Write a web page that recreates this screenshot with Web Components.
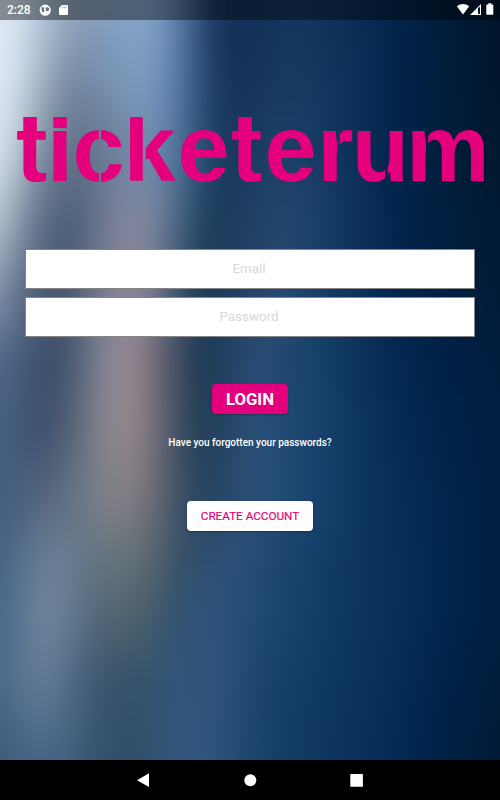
<!DOCTYPE html>
<html lang="en">
<head>
<meta charset="utf-8">
<title>ticketerum</title>
<style>
  body {
    margin: 0;
    font-family: Roboto, "Liberation Sans", sans-serif;
  }
</style>
</head>
<body>
<login-screen></login-screen>

<script>
// Each row of the backdrop: a height, then colour stops as [x, colour]
const ROWS = [
  [20, [[0, "#e0ebf6"], [20, "#d3e0ee"], [40, "#b6c7da"], [60, "#9aadc2"], [80, "#8a9fb8"], [110, "#829fc2"], [145, "#86a6ca"], [170, "#6c8cb6"], [190, "#456590"], [210, "#1e3c64"], [230, "#132f57"], [260, "#14335a"], [300, "#15375d"], [340, "#0f3157"], [390, "#04254d"], [440, "#001e3b"], [500, "#00142b"]]],
  [80, [[0, "#dfe9f3"], [20, "#cdd9e6"], [40, "#a6b6c8"], [60, "#8294a9"], [80, "#73869f"], [110, "#7893b3"], [145, "#7e9dc2"], [170, "#6485b0"], [190, "#416490"], [210, "#1f4067"], [235, "#153257"], [260, "#16365d"], [300, "#193b62"], [340, "#11345c"], [390, "#04254d"], [440, "#001f3c"], [500, "#00152b"]]],
  [150, [[0, "#dae4ee"], [20, "#b4c1cf"], [40, "#8492a5"], [60, "#65768c"], [80, "#5e6f87"], [110, "#6c7e98"], [145, "#748dae"], [170, "#5f7fa6"], [190, "#3b5f86"], [210, "#204467"], [230, "#17365a"], [280, "#1e4068"], [320, "#163b63"], [390, "#04254e"], [440, "#001f3d"], [500, "#00182f"]]],
  [220, [[0, "#b8c5d2"], [20, "#8594a8"], [40, "#5f7088"], [70, "#4a5c76"], [90, "#5d6d86"], [115, "#7c8098"], [140, "#858ba3"], [165, "#667995"], [185, "#3c5c79"], [205, "#1d405c"], [230, "#1a3b5c"], [285, "#26486f"], [325, "#173d68"], [390, "#04264f"], [440, "#001f40"], [500, "#001a32"]]],
  [290, [[0, "#8696ac"], [20, "#5f708a"], [50, "#42546d"], [75, "#4d5d75"], [100, "#777c90"], [130, "#928b9c"], [150, "#7f7c90"], [170, "#50607a"], [190, "#274460"], [210, "#1a3953"], [235, "#213f61"], [275, "#294c73"], [320, "#173e69"], [390, "#04274f"], [440, "#002044"], [500, "#001b37"]]],
  [360, [[0, "#536a8d"], [20, "#475b7b"], [50, "#3a4c67"], [75, "#4d5b73"], [100, "#7f8295"], [130, "#9a8c95"], [150, "#816f7b"], [170, "#50566a"], [190, "#29425a"], [210, "#1c3750"], [235, "#274769"], [265, "#2a4d76"], [320, "#154069"], [390, "#052a52"], [440, "#002248"], [500, "#001d3d"]]],
  [430, [[0, "#446080"], [20, "#405776"], [45, "#3d506a"], [75, "#586579"], [100, "#85858f"], [130, "#97888d"], [150, "#7d737c"], [170, "#505b6c"], [190, "#2d4459"], [210, "#203d58"], [235, "#294a6e"], [260, "#2b5078"], [310, "#184570"], [390, "#072d55"], [440, "#01244b"], [500, "#001e40"]]],
  [500, [[0, "#425f7e"], [20, "#49607f"], [45, "#56687f"], [75, "#667587"], [100, "#7b8089"], [130, "#837f84"], [150, "#716f78"], [170, "#4e5b6c"], [190, "#2f485f"], [210, "#274560"], [240, "#2a4d73"], [260, "#2b5077"], [310, "#174570"], [390, "#092f57"], [440, "#03274e"], [500, "#001e41"]]],
  [560, [[0, "#446381"], [20, "#566f8c"], [45, "#6b8098"], [70, "#697d91"], [95, "#637581"], [125, "#66727a"], [150, "#5b676f"], [170, "#42576a"], [190, "#304d69"], [220, "#2d5076"], [245, "#2a4f77"], [300, "#174169"], [390, "#0a3058"], [440, "#032850"], [500, "#001e41"]]],
  [615, [[0, "#48688a"], [20, "#5b7492"], [45, "#72879d"], [70, "#647a91"], [95, "#52677a"], [125, "#53656f"], [150, "#465d6c"], [170, "#365570"], [195, "#305378"], [225, "#2c5179"], [260, "#214a72"], [300, "#14406a"], [390, "#0a3058"], [440, "#022750"], [500, "#001f40"]]],
  [680, [[0, "#4a6988"], [20, "#587491"], [45, "#677e99"], [70, "#526b85"], [95, "#3e5870"], [125, "#375269"], [150, "#34546e"], [175, "#32567b"], [205, "#315479"], [235, "#294e77"], [270, "#18416a"], [320, "#103a63"], [390, "#082e56"], [440, "#01244b"], [500, "#001c3a"]]],
  [760, [[0, "#3c5a78"], [20, "#436280"], [45, "#47678a"], [70, "#405f7d"], [95, "#365571"], [125, "#2d4b64"], [150, "#30516e"], [175, "#35577d"], [200, "#345780"], [235, "#254c73"], [270, "#153f66"], [320, "#10375f"], [390, "#052b55"], [430, "#00234b"], [500, "#001a34"]]],
];

// room round the backdrop, so that the blur has no pale edge
const BLEED = 40;

class BlurBackdrop extends HTMLElement {
  constructor() {
    super();
    this.attachShadow({ mode: "open" });
  }

  static get styles() {
    return /* css */`
      :host {
        display: grid;
        overflow: hidden;
      }
      .layers {
        display: grid;
        margin: -${BLEED}px;
        filter: blur(13px);
      }
      .layer {
        grid-area: 1 / 1;
      }
    `;
  }

  // every layer fades in over the one before it, down to its own height
  layer([y, stops], i) {
    const colors = stops.map(([x, color]) => `${color} ${x + BLEED}px`).join(", ");
    const mask = i === 0
      ? ""
      : `mask-image: linear-gradient(transparent ${ROWS[i - 1][0] + BLEED}px, #000 ${y + BLEED}px);`;
    return `<div class="layer" style="background: linear-gradient(90deg, ${colors}); ${mask}"></div>`;
  }

  connectedCallback() {
    this.shadowRoot.innerHTML = /* html */`
    <style>${BlurBackdrop.styles}</style>
    <div class="layers">${ROWS.map((row, i) => this.layer(row, i)).join("")}</div>`;
  }
}

class StatusBar extends HTMLElement {
  constructor() {
    super();
    this.attachShadow({ mode: "open" });
  }

  static get styles() {
    return /* css */`
      :host {
        display: flex;
        align-items: center;
        height: 20px;
        box-sizing: border-box;
        padding: 0 4px 0 7px;
        background: rgba(0, 0, 0, .4);
        color: #fff;
        font-size: 12px;
        font-weight: 500;
      }
      .time {
        width: 32px;
        line-height: 20px;
      }
      svg {
        display: block;
        fill: #fff;
      }
      .space {
        flex: 1;
      }
    `;
  }

  connectedCallback() {
    this.shadowRoot.innerHTML = /* html */`
    <style>${StatusBar.styles}</style>
    <span class="time"><slot></slot></span>
    <svg width="30" height="20" viewBox="39 0 30 20">
      <path fill-rule="evenodd" d="M45.200 4.600a5.600 5.600 0 1 0 0 11.200a5.600 5.600 0 1 0 0-11.200zM41.500 7.200H44.200V12.600Q41.500 12 41.500 9.500zM45.800 7.200H47.200a2 2 0 0 1 0 4H45.800z"/>
      <path d="M62 5H67a1 1 0 0 1 1 1V14a1 1 0 0 1-1 1H60a1 1 0 0 1-1-1V8z"/>
      <path fill="#87919c" d="M62 6.600h.9v1.700H62zM63.800 6.600h.9v1.700h-.9zM65.600 6.600h.9v1.700h-.9z"/>
    </svg>
    <span class="space"></span>
    <svg width="40" height="20" viewBox="456 0 40 20">
      <path d="M456.800 6.200Q463 1.800 469.200 6.200L463 14.600z"/>
      <path fill-rule="evenodd" d="M481 4V15H470zM478 8.400V14H480V6.400z"/>
      <path d="M488.300 3.200h3v1.300h1.400q.6 0 .6.700V14q0 .7-.6.700h-5.800q-.6 0-.6-.7V5.200q0-.7.6-.7h1.400z"/>
    </svg>`;
  }
}

class BrandLogo extends HTMLElement {
  constructor() {
    super();
    this.attachShadow({ mode: "open" });
  }

  static get styles() {
    return /* css */`
      :host {
        display: block;
      }
      svg {
        display: block;
      }
      text {
        font: bold 94px "Liberation Sans", Arial, sans-serif;
      }
      g {
        fill: #e4007c;
      }
    `;
  }

  connectedCallback() {
    // the mask makes the stencil cuts through the letters
    this.shadowRoot.innerHTML = /* html */`
    <style>${BrandLogo.styles}</style>
    <svg width="500" height="124" viewBox="0 84 500 124">
      <mask id="cuts" maskUnits="userSpaceOnUse" x="0" y="84" width="500" height="124">
        <rect x="0" y="117" width="500" height="65" fill="#fff"/>
        <path fill="#000" d="M98.800 125h2.200v17h-2.200zM98.800 168h2.200v16h-2.200zM142.800 110h3v75h-3zM337.400 125h2.400v25h-2.400zM352.300 125h4.200v30h-4.200zM385.300 160h2.400v25h-2.400zM426 125h2.200v25h-2.200zM52 128.300h18v2.400h-18z"/>
      </mask>
      <g mask="url(#cuts)">
        <text y="180.700" x="16 47 72.600 123.600 177.500 231 264.500 317.300 351.800 406">ticketerum</text>
        <path d="M53.400 117h13.400v11.300h-13.400zM23.300 117h13.500v14h-13.500zM238.300 117h13.500v14h-13.500z"/>
      </g>
    </svg>`;
  }
}

class LoginField extends HTMLElement {
  constructor() {
    super();
    this.attachShadow({ mode: "open" });
  }

  static get styles() {
    return /* css */`
      :host {
        display: block;
      }
      input {
        display: block;
        width: 100%;
        height: 40px;
        box-sizing: border-box;
        margin: 0;
        padding: 0 2px 2px 0;
        border: 1px solid #858585;
        border-radius: 0;
        background: #fff;
        font: 13.400px Roboto, sans-serif;
        text-align: center;
      }
      input::placeholder {
        color: #d8d8d8;
      }
    `;
  }

  connectedCallback() {
    this.shadowRoot.innerHTML = /* html */`
    <style>${LoginField.styles}</style>
    <input type="${this.getAttribute("type")}" placeholder="${this.getAttribute("label")}">`;
  }
}

class LoginButton extends HTMLElement {
  constructor() {
    super();
    this.attachShadow({ mode: "open" });
  }

  static get styles() {
    return /* css */`
      :host {
        display: block;
      }
      button {
        display: block;
        width: 126px;
        height: 30px;
        padding: 1px 0 0;
        border: 0;
        border-radius: 4px;
        background: #fff;
        color: #e4007c;
        font: 400 11.700px/29px Roboto, sans-serif;
        -webkit-text-stroke: .2px #e4007c;
        box-shadow: 0 1px 2px rgba(0, 0, 0, .3);
      }
      :host([primary]) button {
        width: 76px;
        background: #e4007c;
        color: #fff;
        font-size: 16.700px;
        font-weight: 700;
        -webkit-text-stroke: 0;
      }
    `;
  }

  connectedCallback() {
    this.shadowRoot.innerHTML = /* html */`
    <style>${LoginButton.styles}</style>
    <button><slot></slot></button>`;
  }
}

class NavBar extends HTMLElement {
  constructor() {
    super();
    this.attachShadow({ mode: "open" });
  }

  static get styles() {
    return /* css */`
      :host {
        display: flex;
        justify-content: center;
        height: 40px;
        background: #000;
      }
      svg {
        fill: #fff;
      }
    `;
  }

  connectedCallback() {
    this.shadowRoot.innerHTML = /* html */`
    <style>${NavBar.styles}</style>
    <svg width="260" height="40" viewBox="120 760 260 40">
      <path d="M149 773.300V787L137 780.200z"/>
      <circle cx="250.300" cy="780.300" r="6"/>
      <rect x="350.300" y="774" width="12.600" height="12.800" rx=".5"/>
    </svg>`;
  }
}

class LoginScreen extends HTMLElement {
  constructor() {
    super();
    this.attachShadow({ mode: "open" });
  }

  static get styles() {
    return /* css */`
      :host {
        display: grid;
        grid-template: 760px 40px / 500px;
      }
      blur-backdrop, .content {
        grid-area: 1 / 1;
      }
      .content {
        z-index: 1;
        display: flex;
        flex-direction: column;
      }
      brand-logo {
        margin-top: 64px;
      }
      .form {
        display: flex;
        flex-direction: column;
        gap: 8px;
        padding: 41px 25px 0;
      }
      .actions {
        display: flex;
        flex-direction: column;
        align-items: center;
        padding-top: 47px;
      }
      a {
        margin: 21px 0 51px;
        color: #fff;
        font-size: 10px;
        font-weight: 500;
        line-height: 15px;
      }
    `;
  }

  connectedCallback() {
    this.shadowRoot.innerHTML = /* html */`
    <style>${LoginScreen.styles}</style>
    <blur-backdrop></blur-backdrop>
    <div class="content">
      <status-bar>2:28</status-bar>
      <brand-logo></brand-logo>
      <div class="form">
        <login-field type="email" label="Email"></login-field>
        <login-field type="password" label="Password"></login-field>
      </div>
      <div class="actions">
        <login-button primary>LOGIN</login-button>
        <a>Have you forgotten your passwords?</a>
        <login-button>CREATE ACCOUNT</login-button>
      </div>
    </div>
    <nav-bar></nav-bar>`;
  }
}

customElements.define("blur-backdrop", BlurBackdrop);
customElements.define("status-bar", StatusBar);
customElements.define("brand-logo", BrandLogo);
customElements.define("login-field", LoginField);
customElements.define("login-button", LoginButton);
customElements.define("nav-bar", NavBar);
customElements.define("login-screen", LoginScreen);
</script>
</body>
</html>
